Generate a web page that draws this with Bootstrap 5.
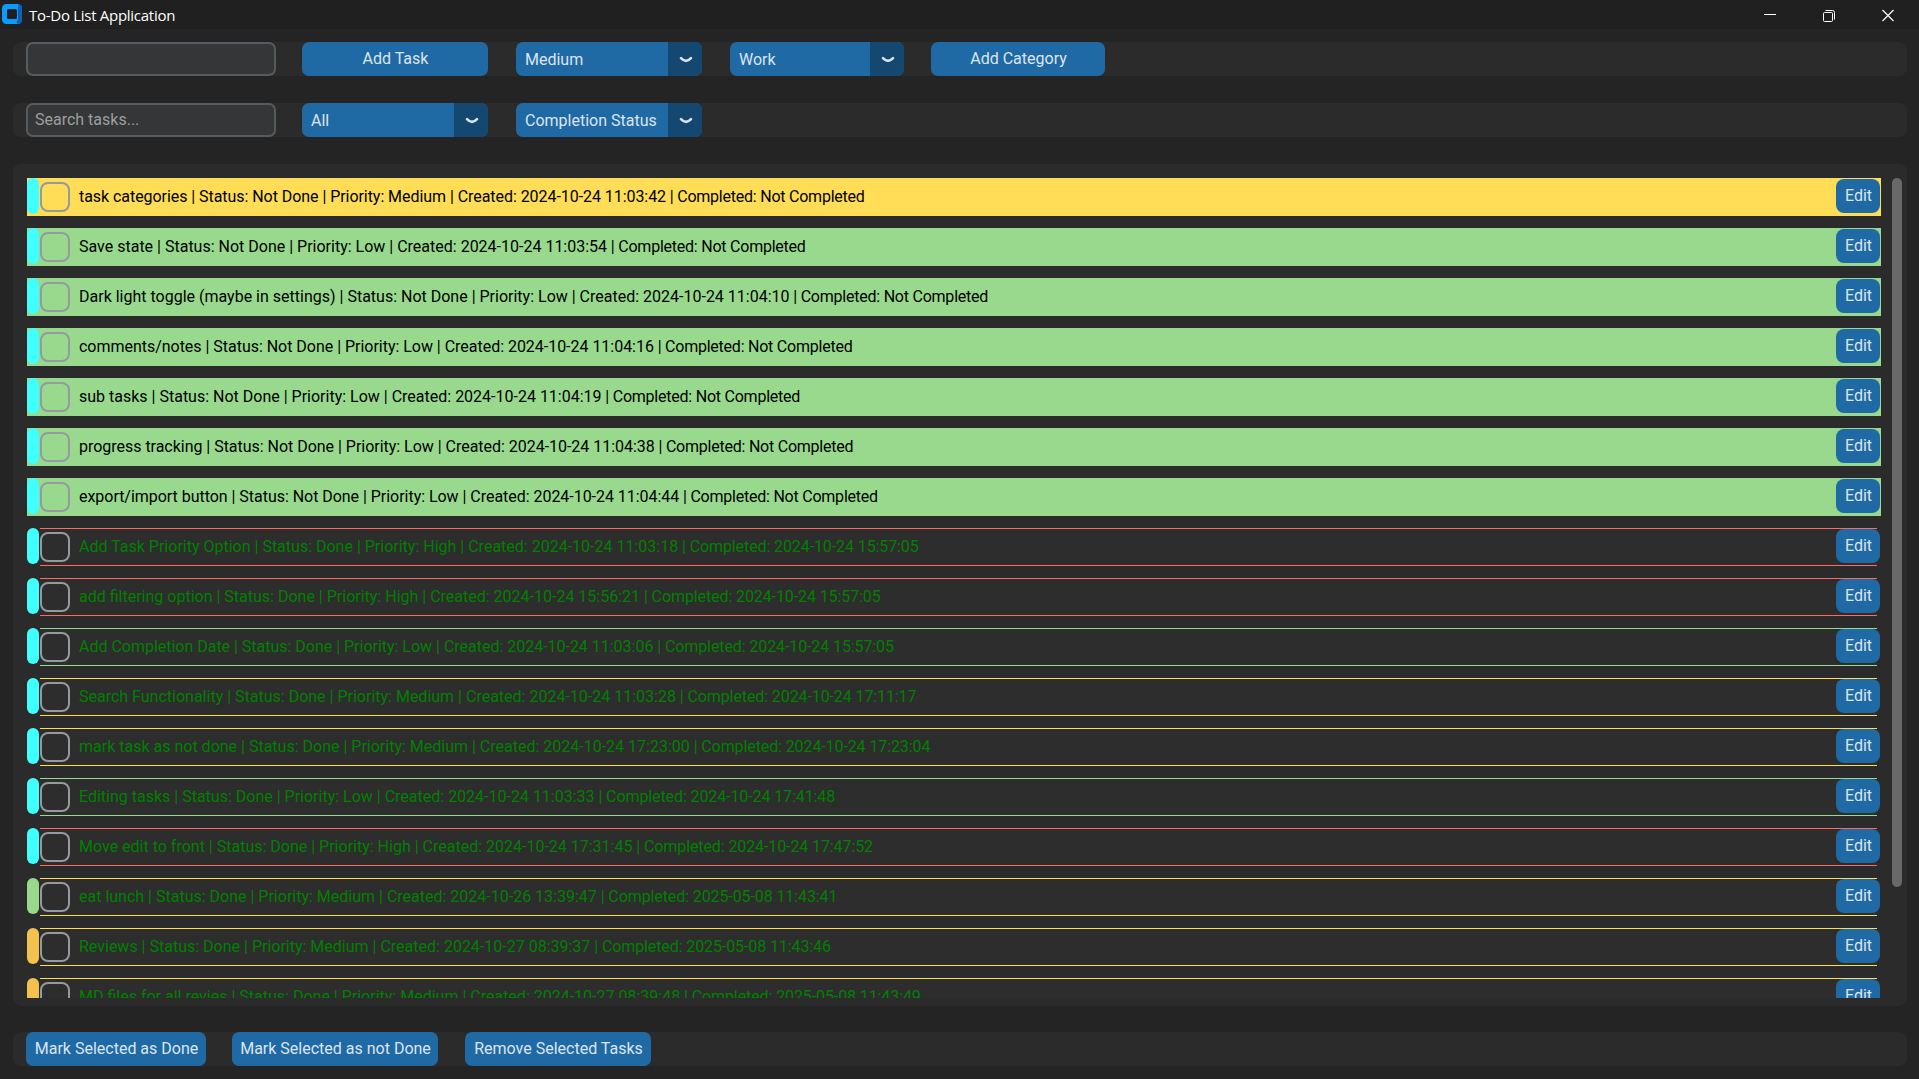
<!DOCTYPE html>
<html lang="en">
<head>
<meta charset="utf-8">
<title>To-Do List Application</title>
<link href="https://cdn.jsdelivr.net/npm/bootstrap@5.3.0/dist/css/bootstrap.min.css" rel="stylesheet">
<style>
body{background:#242424;font-family:Roboto,"Liberation Sans",sans-serif;font-size:16px;line-height:20px;color:#dce4ee;height:1079px;overflow:hidden}
.titlebar{height:29px;background:#202020;color:#fff;font-family:"Open Sans","Noto Sans",sans-serif;font-size:15px;padding-left:2px}
.titlebar .caption{margin-left:7px;letter-spacing:-.28px}
.winctl{width:59px}
.winctls{margin-right:1.5px;padding-bottom:2px}
.panel{background:#2b2b2b;border-radius:8px;margin:0 12px 0 13px}
.bar{height:34px;padding-left:13px}
.entry{width:250px;height:34px;background:#343638;border:2px solid #565b5e;border-radius:7px;color:#9e9e9e;padding:0 7px 2px;font-size:16px;line-height:20px}
.entry::placeholder{color:#9e9e9e;opacity:1}
.entry:focus{background:#343638;box-shadow:none}
.cta{height:34px;background:#1f6aa5;color:#dce4ee;border:0;border-radius:7px;padding:0 0 1px 1px;font-size:16px;line-height:20px;white-space:nowrap}
.cta:hover{background:#144870;color:#dce4ee}
.combo{height:34px;border-radius:7px;overflow:hidden;background:#1f6aa5;padding:0;border:0;color:#dce4ee;line-height:20px;font-size:16px}
.combo .val{padding-left:9px;padding-top:1px}
.combo .arrow{width:34px;background:#144870;padding:2px 0 0 2px}
.list-area{height:842px;padding:14px 5px 8px 14px}
.tasks{width:1854px;height:820px;overflow:hidden}
.task{height:38px;margin-bottom:12px;flex:none;color:#008000;position:relative}
.task .strip{width:12px;height:36px;border-radius:6px;background:#40ffff;margin-right:1px}
.task .inner{height:38px;background:#2d2d2d;border:solid var(--p);border-width:1px 0;margin-right:4px}
.task.open{background:var(--p);color:#000}
.task.open .inner{background:var(--p)}
.task .tick{appearance:none;width:30px;height:30px;border:2px solid #949a9f;border-radius:8px;margin:3px 9px 0 0;background:transparent}
.task .lbl{white-space:pre;padding-top:8px}
.task .tail{letter-spacing:-.1px}
.task.open .tail{letter-spacing:-.23px}
.task .edit{position:absolute;right:1px;top:1px;width:44px;border-radius:8px}
.p-high{--p:#ff6961}.p-medium{--p:#ffdd57}.p-low{--p:#98d98e}
.task .s-green{background:#98d98e}.task .s-gold{background:#f2c14e}
.thumb{width:10px;height:709px;border-radius:5px;background:#696969}
</style>
</head>
<body>
<header class="titlebar d-flex align-items-center">
  <svg width="20" height="20" viewBox="0 0 20 20" style="margin-top:-1px"><rect width="20" height="20" rx="4.500" fill="#0a9bff"/><path d="M15.500 0Q20 0 20 4.500V15.500Q20 20 15.500 20L14.500 18L16 15V5Z" fill="#0863b5"/><path d="M14 0h1.500l1 2-1.500 3z" fill="#0a9bff"/><rect x="5" y="5" width="10" height="10" rx="1.500" fill="#202020"/></svg>
  <span class="caption">To-Do List Application</span>
  <div class="d-flex ms-auto winctls">
    <div class="winctl text-center"><svg width="12" height="13"><path d="M0 5.500h12" stroke="#fff"/></svg></div>
    <div class="winctl text-center"><svg width="12" height="13" fill="none" stroke="#fff"><rect x=".5" y="3.500" width="9" height="9" rx="1"/><path d="M2.500 1.500h7q2 0 2 2v7"/></svg></div>
    <div class="winctl text-center"><svg width="12" height="13"><path d="M.5 1l11 11M11.500 1l-11 11" stroke="#fff" stroke-width="1.100"/></svg></div>
  </div>
</header>
<main class="d-flex flex-column">
  <div class="panel bar d-flex" style="margin-top:13px">
    <input class="form-control entry" aria-label="New task">
    <button class="btn cta" style="width:186px;margin-left:26px">Add Task</button>
    <button class="combo d-flex text-start" style="width:186px;margin-left:28px"><span class="val flex-grow-1 align-self-center">Medium</span><span class="arrow h-100 d-flex align-items-center justify-content-center"><svg width="14" height="8"><path d="M2 2.200Q7 7.500 12 2.200" fill="none" stroke="#dce4ee" stroke-width="2.600" stroke-linecap="round"/></svg></span></button>
    <button class="combo d-flex text-start" style="width:174px;margin-left:28px"><span class="val flex-grow-1 align-self-center">Work</span><span class="arrow h-100 d-flex align-items-center justify-content-center"><svg width="14" height="8"><path d="M2 2.200Q7 7.500 12 2.200" fill="none" stroke="#dce4ee" stroke-width="2.600" stroke-linecap="round"/></svg></span></button>
    <button class="btn cta" style="width:174px;margin-left:27px">Add Category</button>
  </div>
  <div class="panel bar d-flex" style="margin-top:27px">
    <input class="form-control entry" placeholder="Search tasks...">
    <button class="combo d-flex text-start" style="width:186px;margin-left:26px"><span class="val flex-grow-1 align-self-center">All</span><span class="arrow h-100 d-flex align-items-center justify-content-center"><svg width="14" height="8"><path d="M2 2.200Q7 7.500 12 2.200" fill="none" stroke="#dce4ee" stroke-width="2.600" stroke-linecap="round"/></svg></span></button>
    <button class="combo d-flex text-start" style="width:186px;margin-left:28px"><span class="val flex-grow-1 align-self-center">Completion Status</span><span class="arrow h-100 d-flex align-items-center justify-content-center"><svg width="14" height="8"><path d="M2 2.200Q7 7.500 12 2.200" fill="none" stroke="#dce4ee" stroke-width="2.600" stroke-linecap="round"/></svg></span></button>
  </div>
  <section class="panel list-area d-flex justify-content-between" style="margin-top:27px">
    <div class="tasks d-flex flex-column" id="tasks"></div>
    <div class="thumb"></div>
  </section>
  <footer class="panel bar d-flex" style="margin-top:26px">
    <button class="btn cta" style="width:180px">Mark Selected as Done</button>
    <button class="btn cta" style="width:206px;margin-left:26px">Mark Selected as not Done</button>
    <button class="btn cta" style="width:186px;margin-left:27px">Remove Selected Tasks</button>
  </footer>
</main>
<script src="https://cdn.jsdelivr.net/npm/bootstrap@5.3.0/dist/js/bootstrap.bundle.min.js"></script>
<script>
// name, priority, created, completed, category strip, letter spacing
const tasks = [
 ["task categories","Medium","2024-10-24 11:03:42","","",-0.055],
 ["Save state","Low","2024-10-24 11:03:54"],
 ["Dark light toggle (maybe in settings)","Low","2024-10-24 11:04:10"],
 ["comments/notes","Low","2024-10-24 11:04:16","","",-0.025],
 ["sub tasks","Low","2024-10-24 11:04:19"],
 ["progress tracking","Low","2024-10-24 11:04:38","","",-0.025],
 ["export/import button","Low","2024-10-24 11:04:44","","",-0.035],
 ["Add Task Priority Option","High","2024-10-24 11:03:18","2024-10-24 15:57:05"],
 ["add filtering option","High","2024-10-24 15:56:21","2024-10-24 15:57:05"],
 ["Add Completion Date","Low","2024-10-24 11:03:06","2024-10-24 15:57:05","",-0.015],
 ["Search Functionality","Medium","2024-10-24 11:03:28","2024-10-24 17:11:17"],
 ["mark task as not done","Medium","2024-10-24 17:23:00","2024-10-24 17:23:04"],
 ["Editing tasks","Low","2024-10-24 11:03:33","2024-10-24 17:41:48"],
 ["Move edit to front","High","2024-10-24 17:31:45","2024-10-24 17:47:52"],
 ["eat lunch","Medium","2024-10-26 13:39:47","2025-05-08 11:43:41","s-green"],
 ["Reviews","Medium","2024-10-27 08:39:37","2025-05-08 11:43:46","s-gold"],
 ["MD files for all revies","Medium","2024-10-27 08:39:48","2025-05-08 11:43:49","s-gold"]
];
document.getElementById("tasks").innerHTML = tasks.map(([name, prio, made, done, strip, ls]) => `
<div class="task d-flex p-${prio.toLowerCase()} ${done ? "" : "open"}">
  <span class="strip ${strip || ""}"></span>
  <div class="inner d-flex flex-grow-1"><input type="checkbox" class="tick"><span class="lbl" style="letter-spacing:${ls || 0}px">${name} | Status: ${done ? "Done" : "Not Done"} | Priority: ${prio} | Created: ${made}<span class="tail"> | Completed: ${done || "Not Completed"}</span></span></div>
  <button class="btn cta edit">Edit</button>
</div>`).join("");
</script>
</body>
</html>
